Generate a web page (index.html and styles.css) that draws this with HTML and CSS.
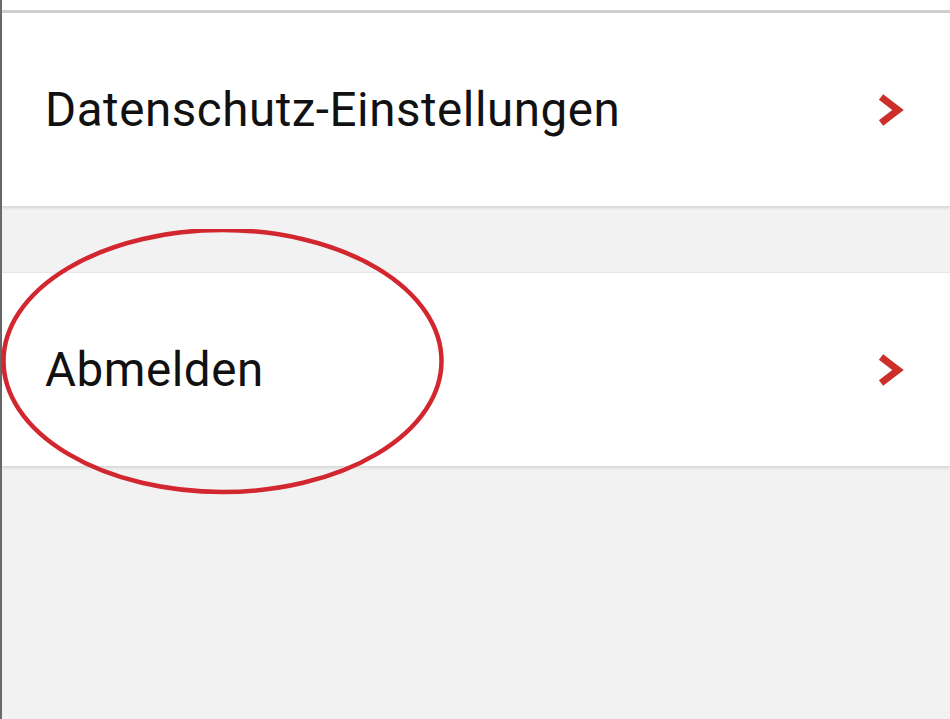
FILE: index.html
```html
<!DOCTYPE html>
<html lang="de">
<head>
    <meta charset="UTF-8">
    <meta name="viewport" content="width=device-width, initial-scale=1.0">
    <title>Einstellungen</title>
    <link rel="stylesheet" href="styles.css">
</head>
<body>
    <div class="screen">
        <div class="top-strip"></div>

        <div class="menu-group first">
            <a class="menu-row" href="#">
                <span class="menu-label">Datenschutz-Einstellungen</span>
                <svg class="chevron" viewBox="0 0 28 34" width="28" height="34">
                    <path d="M4 4 L21 17 L4 30" fill="none" stroke="#cc2e2a" stroke-width="7" stroke-linejoin="miter"/>
                </svg>
            </a>
        </div>

        <div class="menu-group">
            <a class="menu-row" href="#">
                <span class="menu-label">Abmelden</span>
                <svg class="chevron" viewBox="0 0 28 34" width="28" height="34">
                    <path d="M4 4 L21 17 L4 30" fill="none" stroke="#cc2e2a" stroke-width="7" stroke-linejoin="miter"/>
                </svg>
            </a>
        </div>

        <svg class="marker" width="450" height="270" viewBox="0 0 450 270">
            <ellipse cx="224.5" cy="132" rx="219" ry="131" fill="none" stroke="#d3272f" stroke-width="4.5"/>
        </svg>
    </div>
</body>
</html>
```

FILE: styles.css
```css
html, body {
    margin: 0;
    height: 100%;
}

body {
    background-color: #f2f2f2;
    font-family: Roboto, "Noto Sans", sans-serif;
}

.screen {
    position: relative;
    min-height: 100%;
    border-left: 2px solid #6a6a6a;
    box-sizing: border-box;
}

.top-strip {
    height: 10px;
    background-color: #fff;
    border-bottom: 3px solid #cfcfcf;
}

.menu-group {
    background-color: #fff;
    margin-top: 66px;
    border-top: 1px solid #e6e6e6;
    box-shadow: 0 2px 3px rgba(0, 0, 0, 0.12);
}

.menu-group.first {
    margin-top: 0;
    border-top: none;
}

.menu-row {
    display: flex;
    align-items: center;
    justify-content: space-between;
    height: 193px;
    padding: 0 45px 0 43px;
    text-decoration: none;
    color: #111;
}

.menu-label {
    font-size: 47.5px;
    letter-spacing: 0.55px;
}

.chevron {
    display: block;
}

.marker {
    position: absolute;
    left: -4px;
    top: 229px;
}
```
